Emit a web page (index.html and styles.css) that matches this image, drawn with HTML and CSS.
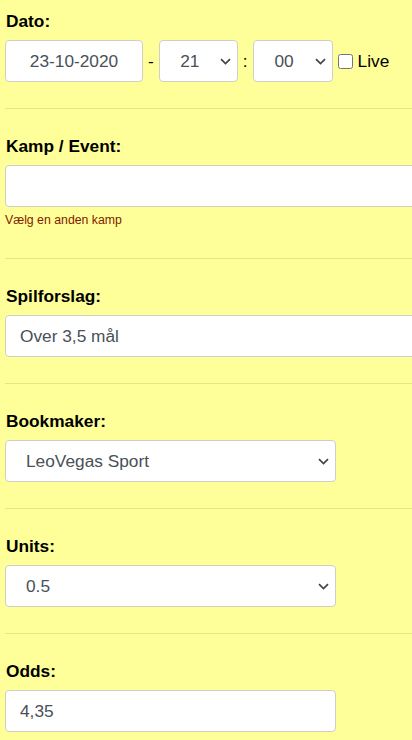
FILE: index.html
```html
<!DOCTYPE html>
<html lang="da">
<head>
<meta charset="utf-8">
<meta name="viewport" content="width=device-width, initial-scale=1">
<title>Spilforslag</title>
<link rel="stylesheet" href="styles.css">
</head>
<body>
<form class="form">
  <div class="group group-first">
    <label class="label">Dato:</label>
    <div class="datetime">
      <input class="control date" type="text" value="23-10-2020">
      <span class="sep">-</span>
      <select class="control select time"><option>21</option></select>
      <span class="sep">:</span>
      <select class="control select time time-min"><option>00</option></select>
      <input type="checkbox" class="check" id="live">
      <label for="live" class="live">Live</label>
    </div>
  </div>
  <hr class="rule">
  <div class="group">
    <label class="label">Kamp / Event:</label>
    <input class="control wide" type="text" value="">
    <div class="help">Vælg en anden kamp</div>
  </div>
  <hr class="rule">
  <div class="group">
    <label class="label">Spilforslag:</label>
    <input class="control wide" type="text" value="Over 3,5 mål">
  </div>
  <hr class="rule">
  <div class="group">
    <label class="label">Bookmaker:</label>
    <select class="control select medium"><option>LeoVegas Sport</option></select>
  </div>
  <hr class="rule">
  <div class="group">
    <label class="label">Units:</label>
    <select class="control select medium"><option>0.5</option></select>
  </div>
  <hr class="rule">
  <div class="group group-last">
    <label class="label">Odds:</label>
    <input class="control medium" type="text" value="4,35">
  </div>
</form>
</body>
</html>
```

FILE: styles.css
```css
html, body {
  margin: 0;
  padding: 0;
  overflow: hidden;
}

body {
  background: #ffff99;
  font-family: "Liberation Sans", Arial, sans-serif;
  font-size: 17.3px;
  color: #000;
}

.form {
  padding-left: 5px;
}

.group {
  padding: 27px 0 26px;
}

.group-first {
  padding-top: 11px;
}

.group-last {
  padding-bottom: 8px;
}

.label {
  display: block;
  font-weight: bold;
  line-height: 21px;
  margin-bottom: 8px;
  padding-left: 1px;
}

.rule {
  border: 0;
  border-top: 1px solid rgba(0, 0, 0, 0.1);
  margin: 0;
  height: 0;
}

.control {
  box-sizing: border-box;
  display: block;
  height: 42px;
  margin: 0;
  padding: 0 14px;
  font-family: "Liberation Sans", Arial, sans-serif;
  font-size: 17.3px;
  color: #495057;
  background-color: #fff;
  border: 1px solid #cfcfc6;
  border-radius: 4px;
  outline: none;
}

.select {
  -webkit-appearance: none;
  appearance: none;
  padding-left: 20px;
  padding-right: 28px;
  background-image: url("data:image/svg+xml,%3Csvg xmlns='http://www.w3.org/2000/svg' width='11' height='7' viewBox='0 0 11 7'%3E%3Cpath d='M1 1.2 L5.5 5.6 L10 1.2' fill='none' stroke='%23444' stroke-width='1.7'/%3E%3C/svg%3E");
  background-repeat: no-repeat;
  background-position: right 6px center;
  background-size: 11px 7px;
}

.datetime {
  display: flex;
  align-items: center;
}

.date {
  width: 138px;
  text-align: center;
}

.sep {
  margin: 0 5px;
  color: #000;
}

.time {
  width: 79px;
  padding-left: 4px;
  padding-right: 21px;
  text-align: center;
  text-align-last: center;
}

.time-min {
  width: 80px;
}

.check {
  width: 15px;
  height: 15px;
  margin: 0 0 0 5px;
}

.live {
  margin-left: 5px;
  color: #000;
}

.wide {
  width: 420px;
}

.medium {
  width: 331px;
}

.help {
  font-size: 12.3px;
  line-height: 18px;
  color: #802000;
  margin-top: 4px;
  margin-bottom: 3px;
}
```
